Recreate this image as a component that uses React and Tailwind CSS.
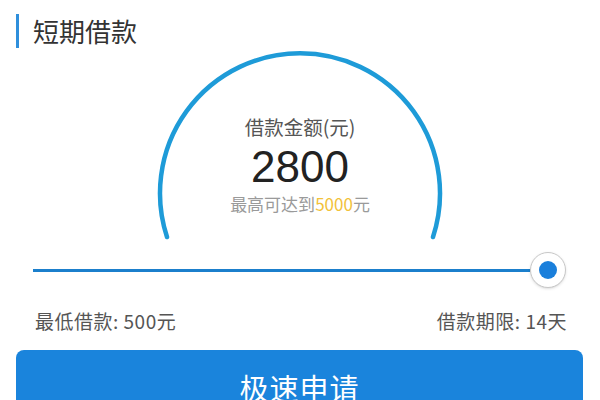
import React from 'react';

const font = { fontFamily: '"Noto Sans CJK SC", "Noto Sans", sans-serif' };

function Gauge() {
  return (
    <div className="relative h-[200px] mt-[2px]">
      {/* arc drawing */}
      <svg className="absolute left-0 top-0" width="600" height="200" viewBox="0 0 600 200">
        <path
          d="M167 187 A140 140 0 1 1 433 187"
          fill="none"
          stroke="#1e9bd8"
          strokeWidth="4.5"
          strokeLinecap="round"
        />
      </svg>
      <div className="relative flex flex-col items-center pt-[64px]">
        <div className="text-[19.5px] leading-[26px] text-[#555]">借款金额(元)</div>
        <div
          className="mt-[2px] text-[44px] leading-[50px] text-[#222]"
          style={{ fontFamily: '"Liberation Sans", "Noto Sans", sans-serif' }}
        >
          2800
        </div>
        <div className="mt-[1px] text-[17px] leading-[22px] text-[#9a9a9a]">
          最高可达到<span className="text-[#f2c23a]">5000</span>元
        </div>
      </div>
    </div>
  );
}

export default function App() {
  return (
    <div className="h-[400px] w-[600px] overflow-hidden bg-white" style={font}>
      {/* Header */}
      <div className="flex items-center pl-4 pt-[14px]">
        <div className="w-[3px] h-[34px] bg-[#2f8fdc]" />
        <div className="ml-[14px] text-[26px] leading-[34px] text-[#333]">短期借款</div>
      </div>

      <Gauge />

      {/* Slider */}
      <div className="flex items-center h-[40px] pl-[33px] pr-[34px]">
        <div className="flex-1 h-[3px] bg-[#1b7fcc]" />
        <div className="w-9 h-9 rounded-full border border-[#c8c8c8] bg-white flex items-center justify-center shadow-sm">
          <div className="w-[18px] h-[18px] rounded-full bg-[#1a7fdb]" />
        </div>
      </div>

      {/* Limits */}
      <div className="mt-[19px] flex justify-between pl-[35px] pr-[33px] text-[19px] leading-[24px] tracking-[0.5px] text-[#555]">
        <span>最低借款: 500元</span>
        <span>借款期限: 14天</span>
      </div>

      {/* Button */}
      <div className="mt-[17px] ml-4 mr-[17px] h-[76px] rounded-lg bg-[#1a84dc] flex items-center justify-center text-[29px] tracking-[1px] text-white">
        极速申请
      </div>
    </div>
  );
}
